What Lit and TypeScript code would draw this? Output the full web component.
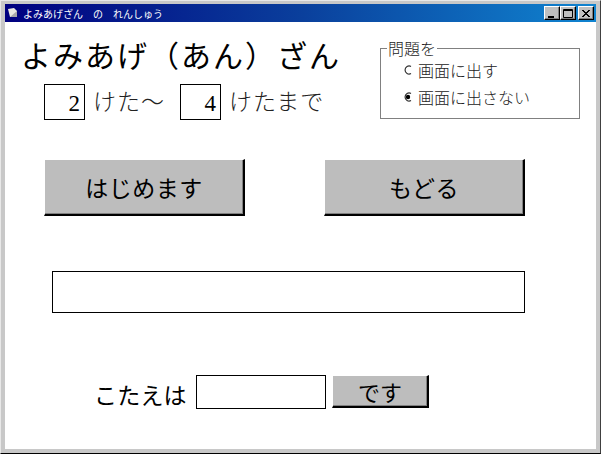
import { LitElement, html, css } from 'lit';
import { customElement } from 'lit/decorators.js';

/** Win9x style title bar button */
@customElement('caption-button')
export class CaptionButton extends LitElement {
  static styles = css`
    :host {
      display: block;
      width: 16px;
      height: 14px;
      box-sizing: border-box;
      background: #c0c0c0;
      border-style: solid;
      border-width: 1px;
      border-color: #fff #000 #000 #fff;
      box-shadow: inset -1px -1px 0 #808080;
    }
    svg {
      display: block;
    }
  `;

  render() {
    return html`<slot></slot>`;
  }
}

@customElement('app-root')
export class AppRoot extends LitElement {
  static styles = css`
    :host {
      display: block;
      width: 601px;
      height: 454px;
      overflow: hidden;
      font-family: "Noto Sans CJK JP", "Liberation Sans", sans-serif;
    }

    .window {
      box-sizing: border-box;
      width: 601px;
      height: 454px;
      background: #c8c8c8;
      padding: 4px;
      border-bottom: 1px solid #000;
      border-right: 1px solid #404040;
      border-top: 1px solid #e8e8e8;
      border-left: 1px solid #e8e8e8;
      display: flex;
      flex-direction: column;
    }

    .titlebar {
      flex: none;
      height: 18px;
      margin-top: -1px;
      background: linear-gradient(90deg, #000080 0%, #0a3f9c 50%, #1084d0 100%);
      display: flex;
      align-items: center;
      padding: 0 2px 0 3px;
      color: #fff;
      font-size: 10px;
    }
    .title-icon {
      flex: none;
      margin-right: 3px;
    }
    .title-text {
      flex: 1;
      white-space: pre;
    }
    .caption-group {
      display: flex;
    }
    .caption-group .close {
      margin-left: 2px;
    }

    .client {
      flex: 1;
      background: #fff;
      display: flex;
      flex-direction: column;
      color: #000;
    }

    .top {
      display: flex;
      height: 117px;
      flex: none;
    }
    .top-left {
      width: 375px;
      flex: none;
    }
    h1 {
      margin: 12px 0 0 16px;
      font-size: 30px;
      line-height: 40px;
      font-weight: 400;
      letter-spacing: 2px;
      white-space: pre;
    }
    .digits {
      display: flex;
      align-items: center;
      margin: 10px 0 0 39px;
      height: 36px;
      font-size: 23px;
      color: #222;
      font-weight: 300;
    }
    .digit {
      box-sizing: border-box;
      width: 41px;
      height: 36px;
      border: 1px solid #000;
      font-family: "Liberation Serif", serif;
      font-size: 23px;
      color: #000;
      text-align: right;
      padding: 5px 4px 0 0;
      line-height: 28px;
    }
    .digit-label {
      margin-left: 8px;
      line-height: 30px;
      margin-top: -4px;
      letter-spacing: 1px;
    }
    .digit-label.first {
      width: 87px;
    }

    fieldset {
      box-sizing: border-box;
      width: 200px;
      height: 79px;
      margin: 18px 0 0 0;
      padding: 0;
      border: 1px solid #808080;
      font-size: 16px;
      color: #222;
      font-weight: 300;
    }
    legend {
      padding: 0 1px;
      margin-left: 6px;
      line-height: 16px;
      font-size: 16px;
    }
    .option {
      display: flex;
      align-items: center;
      height: 27px;
      margin-left: 22px;
    }
    .option svg {
      flex: none;
      margin-right: 5px;
    }

    .actions {
      display: flex;
      margin: 20px 0 0 39px;
      gap: 79px;
      flex: none;
    }
    .btn {
      box-sizing: border-box;
      background: #bdbdbd;
      color: #000;
      display: flex;
      align-items: center;
      justify-content: center;
      border-style: solid;
      border-color: #fff #000 #000 #fff;
      border-width: 1px 2px 2px 1px;
      box-shadow: inset -1px -1px 0 #808080;
    }
    .btn.large {
      width: 201px;
      height: 57px;
      font-size: 23px;
      letter-spacing: 0.5px;
    }
    .btn.small {
      width: 97px;
      height: 33px;
      font-size: 22px;
      margin-left: 6px;
    }

    .output {
      box-sizing: border-box;
      flex: none;
      width: 473px;
      height: 42px;
      margin: 55px 0 0 47px;
      border: 1px solid #000;
    }

    .answer {
      display: flex;
      align-items: flex-start;
      margin: 62px 0 0 89px;
      flex: none;
    }
    .answer-label {
      width: 102px;
      flex: none;
      font-size: 23px;
      letter-spacing: 0.2px;
      line-height: 38px;
      white-space: pre;
    }
    .answer-box {
      box-sizing: border-box;
      width: 130px;
      height: 34px;
      border: 1px solid #000;
    }
  `;

  render() {
    return html`
      <div class="window">
        <div class="titlebar">
          <svg class="title-icon" width="12" height="10" viewBox="0 0 12 10">
            <path d="M0 1 L6 0 L9 3 L9 9 L2 9 Z" fill="#e8e8e0" />
            <path d="M2 9 L9 9 L9 3 Z" fill="#a8a8a8" />
          </svg>
          <span class="title-text">よみあげざん　の　れんしゅう</span>
          <div class="caption-group">
            <caption-button>
              <svg width="13" height="11" viewBox="0 0 13 11"><rect x="3" y="8" width="6" height="2" fill="#000" /></svg>
            </caption-button>
            <caption-button>
              <svg width="13" height="11" viewBox="0 0 13 11"><path d="M2.5 1.5H11.5V9.5H2.5Z M2 2.5H12" fill="none" stroke="#000" /></svg>
            </caption-button>
            <caption-button class="close">
              <svg width="13" height="11" viewBox="0 0 13 11"><path d="M3 2L10 9M4 2L11 9M10 2L3 9M11 2L4 9" stroke="#000" /></svg>
            </caption-button>
          </div>
        </div>
        <div class="client">
          <div class="top">
            <div class="top-left">
              <h1>よみあげ（あん）ざん</h1>
              <div class="digits">
                <div class="digit">2</div>
                <span class="digit-label first">けた〜</span>
                <div class="digit">4</div>
                <span class="digit-label">けたまで</span>
              </div>
            </div>
            <fieldset>
              <legend>問題を</legend>
              <div class="option">
                <svg width="10" height="10" viewBox="0 0 10 10"><path d="M8 1.5A4 4 0 1 0 8 8.5" fill="none" stroke="#333" stroke-width="1.2" /></svg>
                <span>画面に出す</span>
              </div>
              <div class="option">
                <svg width="10" height="10" viewBox="0 0 10 10"><path d="M8 1.5A4 4 0 1 0 8 8.5" fill="none" stroke="#333" stroke-width="1.2" /><circle cx="5" cy="5" r="2.2" fill="#000" /></svg>
                <span>画面に出さない</span>
              </div>
            </fieldset>
          </div>
          <div class="actions">
            <div class="btn large">はじめます</div>
            <div class="btn large">もどる</div>
          </div>
          <div class="output"></div>
          <div class="answer">
            <span class="answer-label">こたえは</span>
            <div class="answer-box"></div>
            <div class="btn small">です</div>
          </div>
        </div>
      </div>
    `;
  }
}
